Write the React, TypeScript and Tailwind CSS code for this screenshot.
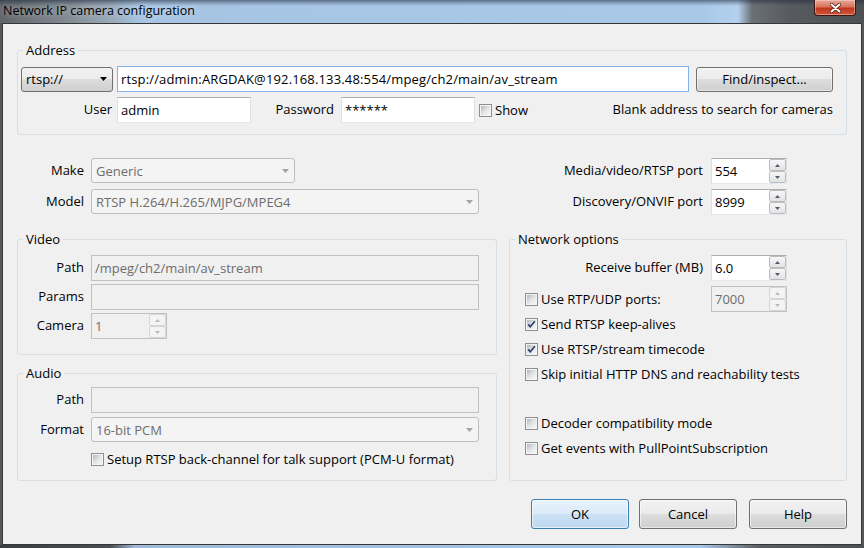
import React from "react";

const BTN_BG =
  "bg-[linear-gradient(to_bottom,#f2f2f2_0%,#ebebeb_50%,#dddddd_50%,#cfcfcf_100%)]";

function Arrow({ color }: { color: string }) {
  return (
    <svg width="7" height="4" viewBox="0 0 7 4">
      <path d="M0 0H7L3.5 4Z" fill={color} />
    </svg>
  );
}

function TextBox({
  value = "",
  className = "",
  disabled = false,
  focused = false,
}: {
  value?: string;
  className?: string;
  disabled?: boolean;
  focused?: boolean;
}) {
  let cls = "bg-white text-black border-t-[#abadb3] border-x-[#dbdfe6] border-b-[#e3e9ef]";
  if (disabled) cls = "bg-[#f0f0f0] text-[#6d6d6d] border-[#bfc2c5]";
  if (focused) cls = "bg-white text-black border-[#7eb4ea]";
  return (
    <div
      className={`h-[26px] shrink-0 flex items-center pl-[3px] pb-[1px] border whitespace-nowrap overflow-hidden ${cls} ${className}`}
    >
      {value}
    </div>
  );
}

function Combo({
  value,
  className = "",
  disabled = false,
}: {
  value: string;
  className?: string;
  disabled?: boolean;
}) {
  return (
    <div
      className={`h-[25px] shrink-0 flex items-center justify-between rounded-[3px] border pl-[4px] pr-[5px] ${
        disabled
          ? "border-[#bcbfc2] bg-[#f4f4f4] text-[#6d6d6d]"
          : `border-[#707070] text-black ${BTN_BG}`
      } ${className}`}
    >
      <span>{value}</span>
      <Arrow color={disabled ? "#a3a3a3" : "#000000"} />
    </div>
  );
}

function SpinBtn({ up = false, disabled = false }: { up?: boolean; disabled?: boolean }) {
  return (
    <div
      className={`flex-1 flex items-center justify-center rounded-[2px] border ${
        disabled
          ? "border-[#d5d5d5] bg-[#f4f4f4]"
          : "border-[#bdbdbd] bg-[linear-gradient(to_bottom,#f7f7f7,#e3e3e3)]"
      }`}
    >
      <svg width="5" height="3" viewBox="0 0 5 3">
        <path
          d={up ? "M0 3H5L2.5 0Z" : "M0 0H5L2.5 3Z"}
          fill={disabled ? "#b9b9b9" : "#4e5b74"}
        />
      </svg>
    </div>
  );
}

function Spin({
  value,
  className = "",
  disabled = false,
}: {
  value: string;
  className?: string;
  disabled?: boolean;
}) {
  return (
    <div
      className={`h-[26px] shrink-0 flex items-stretch border ${
        disabled
          ? "bg-[#f0f0f0] text-[#6d6d6d] border-[#bfc2c5]"
          : "bg-white text-black border-t-[#abadb3] border-x-[#dbdfe6] border-b-[#e3e9ef]"
      } ${className}`}
    >
      <div className="flex-1 flex items-center pl-[3px] pb-[1px]">{value}</div>
      <div className="w-[17px] flex flex-col">
        <SpinBtn up disabled={disabled} />
        <SpinBtn disabled={disabled} />
      </div>
    </div>
  );
}

function CheckBox({ checked = false }: { checked?: boolean }) {
  return (
    <svg width="13" height="13" viewBox="0 0 13 13" className="shrink-0">
      <defs>
        <linearGradient id="cbg" x1="0" y1="0" x2="1" y2="1">
          <stop offset="0" stopColor="#b2b6bb" />
          <stop offset="0.5" stopColor="#e3e4e6" />
          <stop offset="1" stopColor="#f7f7f7" />
        </linearGradient>
      </defs>
      <rect x="0.5" y="0.5" width="12" height="12" fill="#f4f4f4" stroke="#8e8f8f" />
      <rect x="2" y="2" width="9" height="9" fill="url(#cbg)" />
      {checked && (
        <path
          d="M3.2 6.4 L5.3 8.8 L9.8 3.3"
          stroke="#2f3f6e"
          strokeWidth="1.7"
          fill="none"
        />
      )}
    </svg>
  );
}

function Check({
  label,
  checked = false,
  className = "",
}: {
  label: string;
  checked?: boolean;
  className?: string;
}) {
  return (
    <div className={`flex items-center ${className}`}>
      <CheckBox checked={checked} />
      <span className="ml-[3px] pb-[1px] whitespace-nowrap">{label}</span>
    </div>
  );
}

function Button({
  label,
  primary = false,
  className = "",
}: {
  label: string;
  primary?: boolean;
  className?: string;
}) {
  return (
    <div
      className={`flex items-center justify-center rounded-[3px] border shrink-0 ${
        primary
          ? "border-[#3c7fb1] bg-[linear-gradient(to_bottom,#e8f3fc_0%,#dbeaf8_50%,#cbe1f5_50%,#bed8f1_100%)] shadow-[inset_0_0_0_1px_rgba(255,255,255,0.6)]"
          : `border-[#707070] ${BTN_BG} shadow-[inset_0_0_0_1px_rgba(255,255,255,0.5)]`
      } ${className}`}
    >
      {label}
    </div>
  );
}

function Group({
  title,
  className = "",
  inner = "",
  children,
}: {
  title: string;
  className?: string;
  inner?: string;
  children: React.ReactNode;
}) {
  return (
    <fieldset className={`border border-[#d5dfe5] rounded-[3px] min-w-0 ${className}`}>
      <legend className="ml-[5px] px-[3px] leading-[18px]">{title}</legend>
      <div className={inner}>{children}</div>
    </fieldset>
  );
}

function Label({ text, className = "" }: { text: string; className?: string }) {
  return (
    <div className={`shrink-0 text-right whitespace-nowrap pb-[2px] ${className}`}>{text}</div>
  );
}

function TitleBar() {
  return (
    <div className="h-[23px] shrink-0 flex items-start justify-between bg-[image:linear-gradient(to_bottom,rgba(30,40,60,0.55)_0px,rgba(30,40,60,0.15)_4px,rgba(30,40,60,0)_6px),linear-gradient(to_right,#5f656b_0px,#848c94_70px,#98a9ba_110px,#a6c4e2_140px,#a9c8e8_700px,#b3d0ee_738px,#6b7075_752px,#575b5f_790px,#4d5154_864px)]">
      <div className="pl-[3px] pt-[2px] leading-[18px] text-[12.5px] text-black [text-shadow:0_0_6px_rgba(255,255,255,0.6)]">
        Network IP camera configuration
      </div>
      <div className="mr-[8px] w-[42px] h-[16px] rounded-b-[4px] border border-t-0 border-[#3d1410] bg-[linear-gradient(to_bottom,#e9a999_0%,#d8735b_45%,#c2371d_55%,#cf5638_100%)] flex items-center justify-center shadow-[inset_0_0_0_1px_rgba(255,220,210,0.45)]">
        <svg width="11" height="10" viewBox="0 0 11 10">
          <path
            d="M1.5 1.5 L9.5 8.5 M9.5 1.5 L1.5 8.5"
            stroke="#4a1a12"
            strokeWidth="3.6"
            strokeLinecap="round"
          />
          <path
            d="M1.5 1.5 L9.5 8.5 M9.5 1.5 L1.5 8.5"
            stroke="#ffffff"
            strokeWidth="2"
            strokeLinecap="round"
          />
        </svg>
      </div>
    </div>
  );
}

export default function App() {
  return (
    <div className="w-[864px] h-[548px] overflow-hidden flex flex-col bg-[#55595d] text-[13px] leading-[18px] text-black font-['Open_Sans',sans-serif]">
      <TitleBar />
      <div className="ml-[2px] w-[860px] h-[522px] shrink-0 border border-[#363636] bg-[#f0f0f0] flex flex-col pl-[14px] pr-[14px]">
        {/* Address */}
        <Group title="Address" className="mt-[17px]" inner="pl-[3px] pr-[13px] pt-[7px] pb-[11px]">
          <div className="flex items-center">
            <Combo value="rtsp://" className="w-[92px]" />
            <TextBox
              focused
              value="rtsp://admin:ARGDAK@192.168.133.48:554/mpeg/ch2/main/av_stream"
              className="flex-1 ml-[4px] tracking-[0.15px]"
            />
            <Button label="Find/inspect..." className="w-[137px] h-[25px] ml-[7px]" />
          </div>
          <div className="flex items-center mt-[5px]">
            <Label text="User" className="w-[91px]" />
            <TextBox value="admin" className="w-[134px] ml-[5px]" />
            <Label text="Password" className="w-[83px]" />
            <TextBox value="******" className="w-[134px] ml-[7px]" />
            <Check label="Show" className="ml-[4px]" />
            <div className="flex-1" />
            <div className="whitespace-nowrap pb-[2px]">Blank address to search for cameras</div>
          </div>
        </Group>

        <div className="flex items-start mt-[23px]">
          {/* Left column */}
          <div className="w-[480px] flex flex-col">
            <div className="flex items-center">
              <Label text="Make" className="w-[67px]" />
              <Combo value="Generic" disabled className="w-[204px] ml-[7px]" />
            </div>
            <div className="flex items-center mt-[6px]">
              <Label text="Model" className="w-[67px]" />
              <Combo value="RTSP H.264/H.265/MJPG/MPEG4" disabled className="w-[388px] ml-[7px]" />
            </div>

            <Group title="Video" className="mt-[16px]" inner="pr-[17px] pt-[7px] pb-[15px]">
              <div className="flex items-center">
                <Label text="Path" className="w-[66px]" />
                <TextBox value="/mpeg/ch2/main/av_stream" disabled className="flex-1 ml-[7px]" />
              </div>
              <div className="flex items-center mt-[3px]">
                <Label text="Params" className="w-[66px]" />
                <TextBox disabled className="flex-1 ml-[7px]" />
              </div>
              <div className="flex items-center mt-[3px]">
                <Label text="Camera" className="w-[66px]" />
                <Spin value="1" disabled className="w-[76px] ml-[7px]" />
              </div>
            </Group>

            <Group title="Audio" className="mt-[9px]" inner="pr-[17px] pt-[5px] pb-[11px]">
              <div className="flex items-center">
                <Label text="Path" className="w-[66px]" />
                <TextBox disabled className="flex-1 ml-[7px]" />
              </div>
              <div className="flex items-center mt-[4px]">
                <Label text="Format" className="w-[66px]" />
                <Combo value="16-bit PCM" disabled className="flex-1 ml-[7px]" />
              </div>
              <div className="flex items-center h-[20px] mt-[7px] pl-[73px]">
                <Check label="Setup RTSP back-channel for talk support (PCM-U format)" />
              </div>
            </Group>
          </div>

          {/* Right column */}
          <div className="ml-[12px] w-[338px] flex flex-col">
            <div className="flex items-center">
              <Label text="Media/video/RTSP port" className="w-[194px]" />
              <Spin value="554" className="w-[76px] ml-[8px]" />
            </div>
            <div className="flex items-center mt-[5px]">
              <Label text="Discovery/ONVIF port" className="w-[194px]" />
              <Spin value="8999" className="w-[76px] ml-[8px]" />
            </div>

            <Group title="Network options" className="mt-[15px]" inner="pl-[15px] pt-[7px] pb-[19px]">
              <div className="flex items-center">
                <Label text="Receive buffer (MB)" className="w-[178px]" />
                <Spin value="6.0" className="w-[76px] ml-[8px]" />
              </div>
              <div className="flex items-center mt-[5px]">
                <div className="w-[186px]">
                  <Check label="Use RTP/UDP ports:" />
                </div>
                <Spin value="7000" disabled className="w-[76px]" />
              </div>
              <div className="flex flex-col">
                <Check label="Send RTSP keep-alives" checked className="h-[25px]" />
                <Check label="Use RTSP/stream timecode" checked className="h-[25px]" />
                <Check label="Skip initial HTTP DNS and reachability tests" className="h-[25px]" />
                <div className="h-[24px]" />
                <Check label="Decoder compatibility mode" className="h-[25px]" />
                <Check label="Get events with PullPointSubscription" className="h-[25px]" />
              </div>
            </Group>
          </div>
        </div>

        <div className="flex justify-end mt-[18px]">
          <Button label="OK" primary className="w-[98px] h-[30px]" />
          <Button label="Cancel" className="w-[98px] h-[30px] ml-[10px]" />
          <Button label="Help" className="w-[98px] h-[30px] ml-[12px]" />
        </div>
      </div>
      <div className="flex-1 bg-[linear-gradient(to_right,#3b3e41_0px,#4a4e52_110px,#9fbbd8_135px,#a9c8e8_700px,#5a5e62_760px,#4d5154_864px)]" />
    </div>
  );
}
